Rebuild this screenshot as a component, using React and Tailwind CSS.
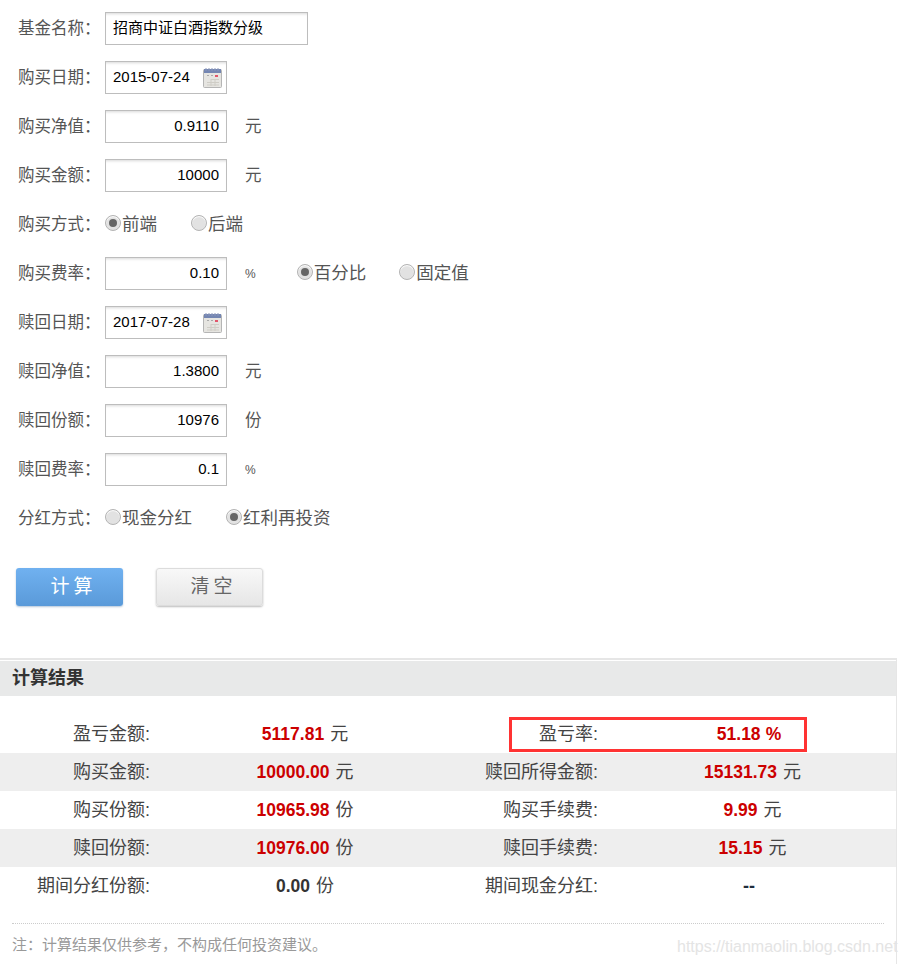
import React from 'react';

const cjk = "font-['Liberation_Sans','Noto_Sans_CJK_SC',sans-serif]";

const CalendarIcon = () => (
  <svg width="19" height="20" viewBox="0 0 19 20" className="shrink-0">
    <rect x="0.5" y="1.5" width="18" height="18" rx="1" fill="#e6e5e1" stroke="#b5b5b5" />
    <rect x="1" y="1" width="17" height="4" fill="#7486b2" />
    <path d="M3 0v3M6 0v3M9 0v3M12 0v3M15 0v3" stroke="#8b97ba" strokeWidth="1" />
    <rect x="4" y="7" width="2" height="1" fill="#aaa" />
    <rect x="8" y="7" width="2" height="1" fill="#aaa" />
    <rect x="12" y="7" width="3" height="2" fill="#e2556b" />
    <path d="M8 11.5h8M4 14.5h12M4 17h12M8 11v7M12 11v7" stroke="#cfcdc6" strokeWidth="1" fill="none" />
  </svg>
);

const Field = ({ value, right, wide, icon }) => (
  <div className={`flex h-[33px] items-center border border-[#bdbdbd] bg-white shadow-[inset_0_3px_3px_-2px_#d8d8d8] ${wide ? 'w-[203px]' : 'w-[122px]'} ${right ? 'justify-end pr-[7px]' : 'justify-between pl-[7px] pr-[4px]'}`}>
    <span className="text-[15px] text-black">{value}</span>
    {icon && <CalendarIcon />}
  </div>
);

const Radio = ({ checked, label, className = '' }) => (
  <div className={`flex items-center ${className}`}>
    <span className="flex h-[16px] w-[16px] -translate-y-[2px] items-center justify-center rounded-full border border-[#b4b4b4] bg-[#e2e2e2] shadow-[inset_0_1px_1px_#fff]">
      {checked && <span className="h-[8px] w-[8px] rounded-full bg-[#666]" />}
    </span>
    <span className="ml-[1px] text-[17.5px] text-[#555]">{label}</span>
  </div>
);

const Row = ({ label, children }) => (
  <div className="mb-[16px] flex h-[33px] items-center">
    <span className="w-[87px] shrink-0 text-[16.5px] text-[#555]">{label}</span>
    {children}
  </div>
);

const Unit = ({ children, className = '' }) => (
  <span className={`ml-[18px] text-[16.5px] text-[#555] ${className}`}>{children}</span>
);

const Value = ({ num, unit, plain }) => (
  <span className="text-[18px] text-[#444]">
    <b className={`text-[17.5px] ${plain ? 'text-[#333]' : 'text-[#cc0000]'} ${unit === '%' ? '' : 'mr-[1px]'}`}>{num}</b>{' '}
    {unit === '%' ? <b className="text-[17.5px] text-[#cc0000]">%</b> : unit}
  </span>
);

const rows = [
  ['盈亏金额:', '5117.81', '元', '盈亏率:', '51.18', '%'],
  ['购买金额:', '10000.00', '元', '赎回所得金额:', '15131.73', '元'],
  ['购买份额:', '10965.98', '份', '购买手续费:', '9.99', '元'],
  ['赎回份额:', '10976.00', '份', '赎回手续费:', '15.15', '元'],
  ['期间分红份额:', '0.00', '份', '期间现金分红:', null, null],
];

export default function App() {
  return (
    <div className={`relative h-[964px] w-[905px] overflow-hidden bg-white ${cjk}`}>
      <div className="pl-[18px] pt-[12px]">
        <Row label="基金名称："><Field value="招商中证白酒指数分级" wide /></Row>
        <Row label="购买日期："><Field value="2015-07-24" icon /></Row>
        <Row label="购买净值："><Field value="0.9110" right /><Unit>元</Unit></Row>
        <Row label="购买金额："><Field value="10000" right /><Unit>元</Unit></Row>
        <Row label="购买方式：">
          <Radio checked label="前端" />
          <Radio label="后端" className="ml-[34px]" />
        </Row>
        <Row label="购买费率：">
          <Field value="0.10" right />
          <Unit className="!text-[12px]">%</Unit>
          <Radio checked label="百分比" className="ml-[41px]" />
          <Radio label="固定值" className="ml-[33px]" />
        </Row>
        <Row label="赎回日期："><Field value="2017-07-28" icon /></Row>
        <Row label="赎回净值："><Field value="1.3800" right /><Unit>元</Unit></Row>
        <Row label="赎回份额："><Field value="10976" right /><Unit>份</Unit></Row>
        <Row label="赎回费率："><Field value="0.1" right /><Unit className="!text-[12px]">%</Unit></Row>
        <Row label="分红方式：">
          <Radio label="现金分红" />
          <Radio checked label="红利再投资" className="ml-[34px]" />
        </Row>
      </div>

      <div className="mt-[33px] flex gap-[33px] pl-[16px]">
        <button className="h-[38px] w-[107px] rounded-[3px] bg-gradient-to-b from-[#70b1f0] to-[#5a9ad9] pl-[8px] text-[19px] tracking-[4px] text-white shadow-[0_1px_2px_#b5c7da]">计算</button>
        <button className="h-[38px] w-[107px] rounded-[3px] border border-[#dcdcdc] bg-gradient-to-b from-[#f8f8f8] to-[#e6e6e6] pl-[8px] text-[19px] tracking-[4px] text-[#666] shadow-[0_1px_2px_#bbb]">清空</button>
      </div>

      <div className="mt-[52px] h-[306px] w-[897px] border-r border-t-2 border-[#e6e6e6]">
        <div className="mt-[1px] flex h-[35px] items-center bg-[#e8e9e9] pl-[12px] text-[18px] font-bold text-[#333]">计算结果</div>
        <div className="mt-[19px]">
          {rows.map((r, i) => (
            <div key={r[0]} className={`grid h-[38px] grid-cols-[150px_310px_138px_1fr] items-center text-[18px] ${i % 2 === 1 ? 'bg-[#eeeeee]' : ''}`}>
              <span className="text-right text-[#444]">{r[0]}</span>
              <span className="text-center"><Value num={r[1]} unit={r[2]} plain={r[1] === '0.00'} /></span>
              <span className="text-right text-[#444]">{r[3]}</span>
              <span className={`text-center ${r[5] === '元' ? 'pl-[11px]' : 'pl-[4px]'}`}>
                {r[4] ? <Value num={r[4]} unit={r[5]} /> : <b className="text-[#1f2d3d]">--</b>}
              </span>
            </div>
          ))}
        </div>
        <div className="mx-[12px] mt-[18px] border-t border-dotted border-[#ccc] pt-[10px] text-[15px] text-[#999]">注：计算结果仅供参考，不构成任何投资建议。</div>
      </div>

      {/* red annotation box drawn over the table */}
      <div className="absolute left-[509px] top-[717px] h-[35px] w-[298px] border-[3px] border-[#ff3333]" />
      <span className="absolute left-[677px] top-[935px] text-[16px] text-[#e4e4e4]">https://tianmaolin.blog.csdn.net</span>
    </div>
  );
}
